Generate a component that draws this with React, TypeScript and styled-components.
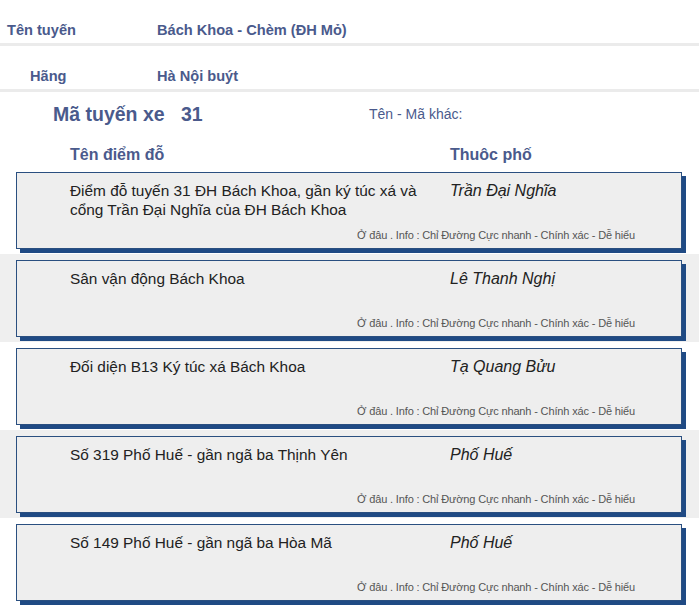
import React from "react";
import styled, { createGlobalStyle } from "styled-components";

const GlobalStyle = createGlobalStyle`
  html, body { margin: 0; padding: 0; background: #ffffff; }
  body { font-family: Arial, "Liberation Sans", sans-serif; }
  * { box-sizing: border-box; }
`;

const Page = styled.div`
  width: 699px;
  background: #ffffff;
`;

const InfoRow = styled.div`
  display: grid;
  grid-template-columns: 157px 1fr;
  height: 46px;
  padding-top: 22px;
  border-bottom: 3px solid #ebebeb;
  font-size: 14.6px;
  line-height: 17px;
  font-weight: bold;
  color: #4a5a8c;
`;

const InfoLabel = styled.div<{ $indent: number }>`
  padding-left: ${(p) => p.$indent}px;
`;

const InfoValue = styled.div``;

const RouteLine = styled.div`
  display: flex;
  align-items: center;
  height: 44px;
  padding-left: 53px;
  color: #4a5a8c;
`;

const RouteTitle = styled.span`
  font-size: 19.5px;
  font-weight: bold;
  width: 128px;
`;

const RouteNumber = styled.span`
  font-size: 19.5px;
  font-weight: bold;
  width: 188px;
`;

const OtherName = styled.span`
  font-size: 14px;
`;

const TableHead = styled.div`
  display: grid;
  grid-template-columns: 380px 1fr;
  padding: 9px 0 0 70px;
  height: 30px;
  font-size: 16px;
  line-height: 19px;
  font-weight: bold;
  color: #4a5a8c;
`;

const Band = styled.div<{ $alt: boolean }>`
  background: ${(p) => (p.$alt ? "#efefef" : "#ffffff")};
  padding: 6px 0 5px 16px;
`;

const Card = styled.div`
  width: 666px;
  height: 77px;
  background: #eeeeee;
  border: 1px solid #2a4f80;
  box-shadow: 4px 4px 0 #1f4a84;
  padding: 8px 46px 6px 53px;
  display: flex;
  flex-direction: column;
`;

const CardBody = styled.div`
  display: grid;
  grid-template-columns: 380px 1fr;
`;

const StopName = styled.div`
  font-size: 15.4px;
  line-height: 19px;
  color: #222222;
  padding-right: 14px;
`;

const Street = styled.div`
  font-size: 16px;
  line-height: 19px;
  font-style: italic;
  color: #222222;
`;

const CardFooter = styled.div`
  margin-top: auto;
  text-align: right;
  font-size: 11px;
  line-height: 14px;
  color: #555555;
  letter-spacing: -0.15px;
`;

const stops = [
  {
    name: "Điểm đỗ tuyến 31 ĐH Bách Khoa, gần ký túc xá và cổng Trần Đại Nghĩa của ĐH Bách Khoa",
    street: "Trần Đại Nghĩa",
  },
  { name: "Sân vận động Bách Khoa", street: "Lê Thanh Nghị" },
  { name: "Đối diện B13 Ký túc xá Bách Khoa", street: "Tạ Quang Bửu" },
  { name: "Số 319 Phố Huế - gần ngã ba Thịnh Yên", street: "Phố Huế" },
  { name: "Số 149 Phố Huế - gần ngã ba Hòa Mã", street: "Phố Huế" },
];

export default function App() {
  return (
    <Page>
      <GlobalStyle />
      <InfoRow>
        <InfoLabel $indent={7}>Tên tuyến</InfoLabel>
        <InfoValue>Bách Khoa - Chèm (ĐH Mỏ)</InfoValue>
      </InfoRow>
      <InfoRow>
        <InfoLabel $indent={30}>Hãng</InfoLabel>
        <InfoValue>Hà Nội buýt</InfoValue>
      </InfoRow>
      <RouteLine>
        <RouteTitle>Mã tuyến xe</RouteTitle>
        <RouteNumber>31</RouteNumber>
        <OtherName>Tên - Mã khác:</OtherName>
      </RouteLine>
      <TableHead>
        <span>Tên điểm đỗ</span>
        <span>Thuôc phố</span>
      </TableHead>
      {stops.map((s, i) => (
        <Band key={i} $alt={i % 2 === 1}>
          <Card>
            <CardBody>
              <StopName>{s.name}</StopName>
              <Street>{s.street}</Street>
            </CardBody>
            <CardFooter>
              Ở đâu . Info : Chỉ Đường Cực nhanh - Chính xác - Dễ hiểu
            </CardFooter>
          </Card>
        </Band>
      ))}
    </Page>
  );
}
